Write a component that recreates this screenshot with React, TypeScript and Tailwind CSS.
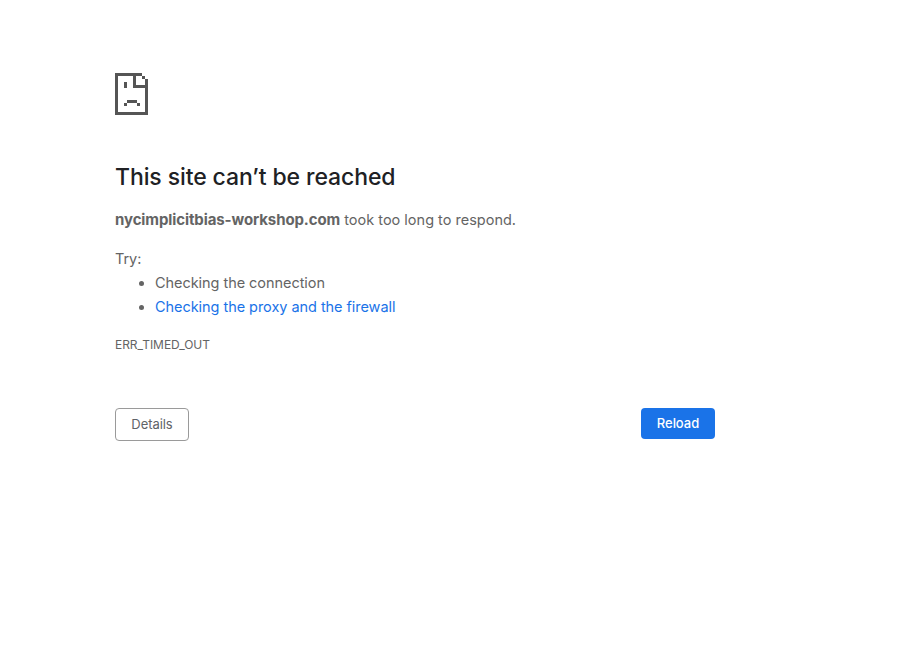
const pixels = [
  // outline
  'M0 0h27v3H0z', 'M0 3h3v36H0z', 'M0 39h33v3H0z', 'M30 6h3v33h-3z',
  // folded corner
  'M27 3h3v3h-3z', 'M18 3h3v9h-3z', 'M18 12h12v3H18z',
  // eye
  'M9 9h3v6H9z',
  // frown
  'M12 27h10v3H12z', 'M9 30h3v3H9z', 'M22 30h3v3h-3z',
];

const SadPage = () => (
  <svg width="33" height="42" viewBox="0 0 33 42" fill="#555555" shapeRendering="crispEdges" className="block">
    {pixels.map((d) => (
      <path key={d} d={d} />
    ))}
  </svg>
);

export default function App() {
  return (
    <div className="min-h-screen bg-white pl-[115px] pt-[73px] font-['Inter','Liberation_Sans',sans-serif] text-[14.5px] tracking-[-0.05px] text-[#646464]">
      <div className="w-[600px]">
        <SadPage />

        <h1 className="mt-[44px] text-[23px] leading-[36px] font-medium tracking-[-0.1px] text-[#202124]">
          This site can’t be reached
        </h1>

        <p className="mt-[12px] leading-[25px] tracking-[0px]">
          <span className="text-[15px] font-bold tracking-[-0.1px]">nycimplicitbias-workshop.com</span> took too long to respond.
        </p>

        <p className="mt-[15px] leading-[24px]">Try:</p>
        <ul className="list-disc pl-[40px] leading-[24px]">
          <li>Checking the connection</li>
          <li>
            <a href="#" className="text-[#1a73e8]">Checking the proxy and the firewall</a>
          </li>
        </ul>

        <div className="mt-[18px] text-[12px] leading-[16px]">ERR_TIMED_OUT</div>

        <div className="mt-[55px] flex items-start justify-between">
          <button className="h-[33px] w-[74px] rounded-[4px] border border-[#9a9a9a] bg-white text-[13px] text-[#5f6368]">
            Details
          </button>
          <button className="h-[31px] w-[74px] rounded-[4px] bg-[#1a73e8] text-[13px] font-medium text-white">
            Reload
          </button>
        </div>
      </div>
    </div>
  );
}
